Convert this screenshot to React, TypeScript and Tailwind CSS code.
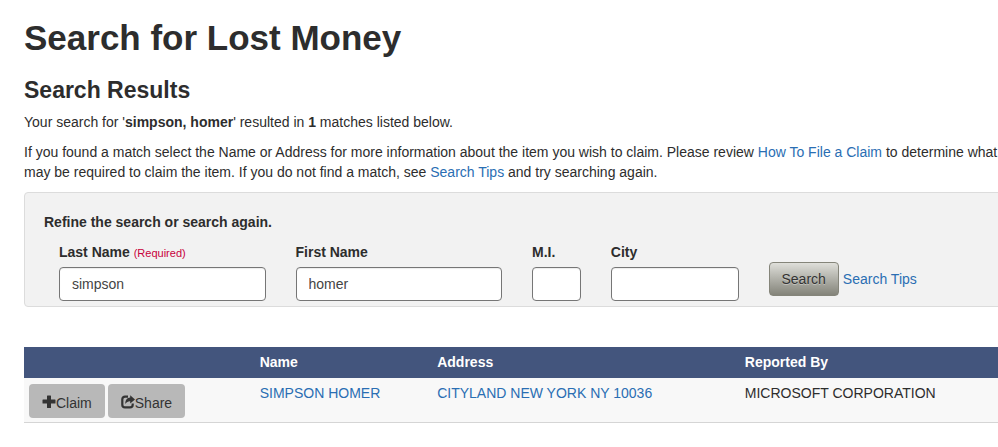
import React, { useState } from 'react';

interface Claim {
  name: string;
  address: string;
  reportedBy: string;
}

const claims: Claim[] = [
  {
    name: 'SIMPSON HOMER',
    address: 'CITYLAND NEW YORK NY 10036',
    reportedBy: 'MICROSOFT CORPORATION',
  },
];

const linkClass = 'text-[#2a6eb3] hover:underline';
const inputClass =
  'block h-[34px] w-full rounded border border-[#767676] bg-white px-3 text-[#444] shadow-[inset_0_1px_1px_rgba(0,0,0,0.075)]';
const labelClass = 'mb-[5px] block font-bold';
const actionClass = 'inline-flex h-[34px] items-center rounded bg-[#b8b8b8] px-[13px] pt-1 text-[#333]';
const glyphClass = 'mb-0.5 h-3.5 w-3.5';

function PlusGlyph() {
  return (
    <svg className={glyphClass} viewBox="0 0 14 14" fill="currentColor" aria-hidden="true">
      <path d="M5.5.5h3a.5.5 0 0 1 .5.5v3.5h4a.5.5 0 0 1 .5.5v3a.5.5 0 0 1-.5.5H9v4a.5.5 0 0 1-.5.5h-3a.5.5 0 0 1-.5-.5v-4H1a.5.5 0 0 1-.5-.5V5a.5.5 0 0 1 .5-.5h4V1a.5.5 0 0 1 .5-.5z" />
    </svg>
  );
}

function ShareGlyph() {
  return (
    <svg className={glyphClass} viewBox="0 0 14 14" aria-hidden="true">
      <path
        d="M7 1.600H4A2.700 2.700 0 0 0 1.300 4.300v5.400A2.700 2.700 0 0 0 4 12.400h5A2.700 2.700 0 0 0 11.700 9.700V8.400"
        fill="none"
        stroke="currentColor"
        strokeWidth="2.200"
      />
      <path d="M9.200.2 14 4.400 9.200 8.600V6.200C7.200 6.100 5.700 6.900 4.300 9 4.200 5.200 6.200 2.800 9.200 2.600z" fill="currentColor" />
    </svg>
  );
}

function SearchForm() {
  const [lastName, setLastName] = useState<string>('simpson');
  const [firstName, setFirstName] = useState<string>('homer');
  const [initial, setInitial] = useState<string>('');
  const [city, setCity] = useState<string>('');

  return (
    <form
      className="mb-10 rounded border border-[#dcdcdc] bg-[#f2f2f2] px-[19px] pt-[19px] pb-[5px]"
      onSubmit={(event) => event.preventDefault()}
    >
      <p className="mb-2.5 font-bold">Refine the search or search again.</p>
      <div className="grid grid-cols-12">
        <div className="col-span-3 px-[15px]">
          <label htmlFor="lastName" className={labelClass}>
            Last Name <span className="text-[11px] leading-none font-normal text-[#c8003c]">(Required)</span>
          </label>
          <input
            id="lastName"
            type="text"
            className={inputClass}
            value={lastName}
            onChange={(event) => setLastName(event.target.value)}
          />
        </div>
        <div className="col-span-3 px-[15px]">
          <label htmlFor="firstName" className={labelClass}>First Name</label>
          <input
            id="firstName"
            type="text"
            className={inputClass}
            value={firstName}
            onChange={(event) => setFirstName(event.target.value)}
          />
        </div>
        <div className="col-span-1 px-[15px]">
          <label htmlFor="initial" className={labelClass}>M.I.</label>
          <input
            id="initial"
            type="text"
            maxLength={1}
            className={inputClass}
            value={initial}
            onChange={(event) => setInitial(event.target.value)}
          />
        </div>
        <div className="col-span-2 px-[15px]">
          <label htmlFor="city" className={labelClass}>City</label>
          <input
            id="city"
            type="text"
            className={inputClass}
            value={city}
            onChange={(event) => setCity(event.target.value)}
          />
        </div>
        <div className="col-span-3 flex items-center gap-1 self-start px-[15px] pt-5">
          <button
            type="submit"
            className="h-[34px] rounded border border-[#85857a] bg-linear-to-b from-[#dfdfda] to-[#84847a] px-3 text-[#333] [text-shadow:0_1px_0_rgba(255,255,255,0.35)]"
          >
            Search
          </button>
          <a href="#tips" className={linkClass}>Search Tips</a>
        </div>
      </div>
    </form>
  );
}

function ResultsTable() {
  return (
    <table className="w-full table-fixed text-left">
      <thead>
        <tr className="bg-[#43557d] text-white">
          <th className="w-[23.4%] px-[5px] py-[5px]" aria-label="Actions"></th>
          <th className="w-[18%] px-[5px] pt-[5px] pb-1.5 font-bold">Name</th>
          <th className="w-[31.2%] px-[5px] pt-[5px] pb-1.5 font-bold">Address</th>
          <th className="px-[5px] pt-[5px] pb-1.5 font-bold">Reported By</th>
        </tr>
      </thead>
      <tbody>
        {claims.map((claim, index) => (
          <tr key={index} className="border-b border-[#d5d5d5] bg-[#f8f8f8] align-top">
            <td className="px-[5px] pt-1.5 pb-1">
              <div className="flex gap-[3px]">
                <button type="button" className={actionClass}>
                  <PlusGlyph />
                  Claim
                </button>
                <button type="button" className={actionClass}>
                  <ShareGlyph />
                  Share
                </button>
              </div>
            </td>
            <td className="px-[5px] pt-[5px]">
              <a href="#name" className={linkClass}>{claim.name}</a>
            </td>
            <td className="px-[5px] pt-[5px]">
              <a href="#address" className={linkClass}>{claim.address}</a>
            </td>
            <td className="px-[5px] pt-[5px]">{claim.reportedBy}</td>
          </tr>
        ))}
      </tbody>
    </table>
  );
}

function App() {
  return (
    <div className="min-h-screen overflow-hidden bg-white font-['Liberation_Sans',Arial,sans-serif] text-sm leading-5 text-[#2d2d2d]">
      {/* the content column runs a little past the right edge */}
      <main className="-mr-3 pt-[18px] pb-6 pl-6">
        <h1 className="mb-5 text-[35px] leading-10 font-bold">Search for Lost Money</h1>
        <h2 className="mb-2.5 text-[23px] leading-6 font-bold">Search Results</h2>
        <p className="mb-2.5">
          Your search for '<strong>simpson, homer</strong>' resulted in <strong>1</strong> matches listed below.
        </p>
        <p className="mb-2.5">
          If you found a match select the Name or Address for more information about the item you wish to claim. Please
          review <a href="#how-to" className={linkClass}>How To File a Claim</a> to determine what may be required to
          claim the item. If you do not find a match, see <a href="#tips" className={linkClass}>Search Tips</a> and try
          searching again.
        </p>
        <SearchForm />
        <ResultsTable />
      </main>
    </div>
  );
}

export default App;
